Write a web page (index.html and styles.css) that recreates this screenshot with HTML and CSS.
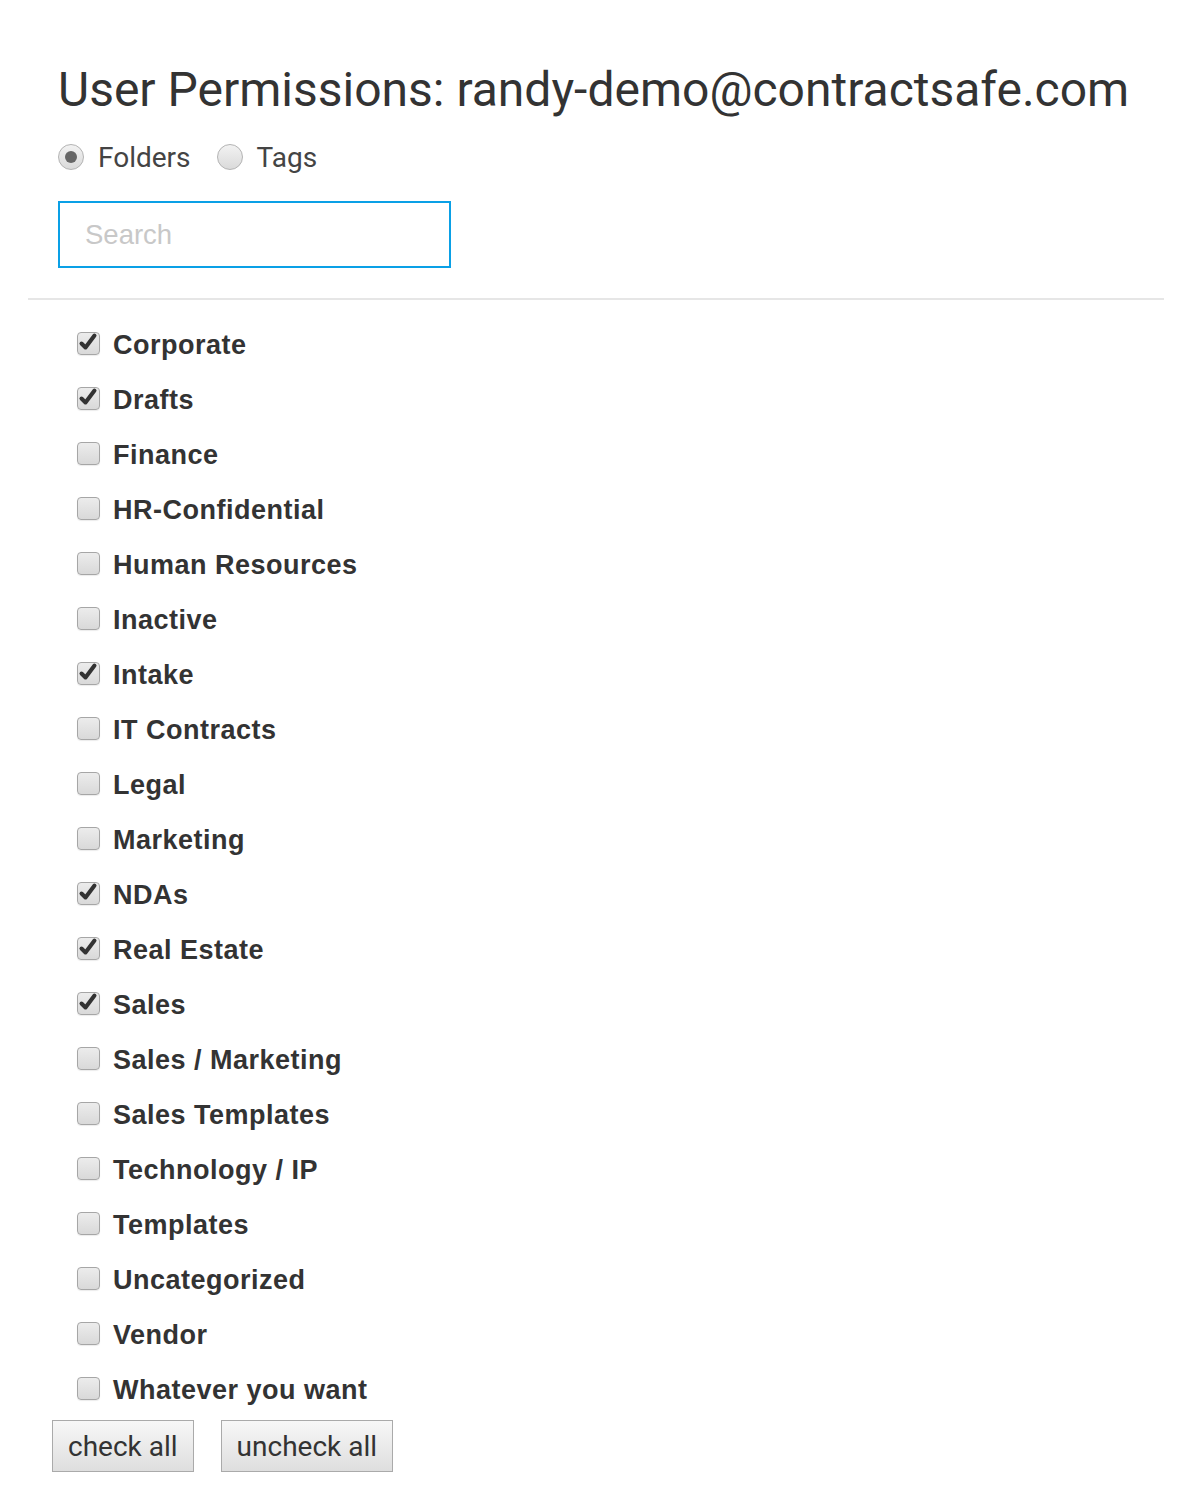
FILE: index.html
```html
<!DOCTYPE html>
<html lang="en">
<head>
  <meta charset="UTF-8">
  <meta name="viewport" content="width=device-width, initial-scale=1.0">
  <title>User Permissions</title>
  <link rel="stylesheet" href="styles.css">
</head>
<body>

  <div class="perm-container">
    <div class="perm-head">
      <h1>User Permissions: randy-demo@contractsafe.com</h1>

      <div class="mode-switch">
        <label class="radio-opt"><span class="radio on"></span>Folders</label>
        <label class="radio-opt"><span class="radio"></span>Tags</label>
      </div>

      <div class="search-box">Search</div>
    </div>

    <hr class="divider">

    <ul class="folder-list" id="folderList">
      <!-- Folders will be injected here -->
    </ul>

    <div class="actions">
      <button class="btn">check all</button>
      <button class="btn">uncheck all</button>
    </div>
  </div>

  <script>
    const folders = [
      { name: "Corporate", checked: true },
      { name: "Drafts", checked: true },
      { name: "Finance", checked: false },
      { name: "HR-Confidential", checked: false },
      { name: "Human Resources", checked: false },
      { name: "Inactive", checked: false },
      { name: "Intake", checked: true },
      { name: "IT Contracts", checked: false },
      { name: "Legal", checked: false },
      { name: "Marketing", checked: false },
      { name: "NDAs", checked: true },
      { name: "Real Estate", checked: true },
      { name: "Sales", checked: true },
      { name: "Sales / Marketing", checked: false },
      { name: "Sales Templates", checked: false },
      { name: "Technology / IP", checked: false },
      { name: "Templates", checked: false },
      { name: "Uncategorized", checked: false },
      { name: "Vendor", checked: false },
      { name: "Whatever you want", checked: false }
    ];

    const tick = `<svg viewBox="0 0 22 22" width="22" height="22"><path d="M4.5 11.5 L8.5 15.5 L17.5 3.5" fill="none" stroke="#333" stroke-width="4" stroke-linejoin="round" stroke-linecap="round"/></svg>`;

    const list = document.getElementById("folderList");
    folders.forEach(folder => {
      const li = document.createElement("li");
      li.className = "folder-row";
      li.innerHTML = `
        <span class="box">${folder.checked ? tick : ""}</span>
        <span class="folder-name">${folder.name}</span>
      `;
      list.appendChild(li);
    });
  </script>

</body>
</html>
```

FILE: styles.css
```css
body {
  margin: 0;
  background-color: #fff;
  font-family: Roboto, "Liberation Sans", sans-serif;
  color: #333;
}

.perm-container {
  padding: 0 24px 0 28px;
}

.perm-head {
  padding: 0 30px;
}

h1 {
  margin: 0;
  padding-top: 60px;
  font-size: 48px;
  font-weight: 400;
  line-height: 60px;
  color: #333;
}

.mode-switch {
  display: flex;
  gap: 26px;
  margin-top: 12px;
  height: 50px;
  align-items: center;
}

.radio-opt {
  display: flex;
  align-items: center;
  gap: 14px;
  font-size: 28px;
  color: #444;
}

.radio {
  width: 24px;
  height: 24px;
  border: 1px solid #b3b3b3;
  border-radius: 50%;
  background: linear-gradient(#f2f2f2, #dadada);
  display: flex;
  align-items: center;
  justify-content: center;
}

.radio.on::after {
  content: "";
  width: 12px;
  height: 12px;
  border-radius: 50%;
  background-color: #666;
}

.search-box {
  margin-top: 19px;
  width: 364px;
  height: 63px;
  border: 2px solid #0aa0e6;
  padding-left: 25px;
  display: flex;
  align-items: center;
  font-family: "Liberation Sans", Arial, sans-serif;
  font-size: 27.5px;
  color: #c8c8c8;
}

.divider {
  margin: 30px 0 0;
  border: 0;
  height: 2px;
  background-color: #e6e6e6;
}

.folder-list {
  list-style: none;
  margin: 18px 0 0;
  padding: 0 0 0 49px;
}

.folder-row {
  display: flex;
  align-items: center;
  height: 55px;
}

.box {
  width: 21px;
  height: 21px;
  border: 1px solid #a6a6a6;
  border-radius: 4px;
  background: linear-gradient(#ececec, #d9d9d9);
  box-shadow: 0 1px 1px rgba(0, 0, 0, 0.08);
  position: relative;
  margin-top: -5px;
}

.box svg {
  position: absolute;
  left: -1px;
  top: -1px;
}

.folder-name {
  margin-left: 13px;
  font-family: "Liberation Sans", Arial, sans-serif;
  font-weight: bold;
  font-size: 27px;
  letter-spacing: 0.5px;
  color: #333;
}

.actions {
  display: flex;
  gap: 27px;
  margin-top: 2px;
  padding-left: 24px;
}

.btn {
  height: 52px;
  padding: 0 15px;
  border: 1px solid #aaa;
  border-radius: 0;
  background: linear-gradient(#f7f7f7, #dedede);
  font-family: Roboto, "Liberation Sans", sans-serif;
  font-size: 28px;
  color: #333;
}
```
